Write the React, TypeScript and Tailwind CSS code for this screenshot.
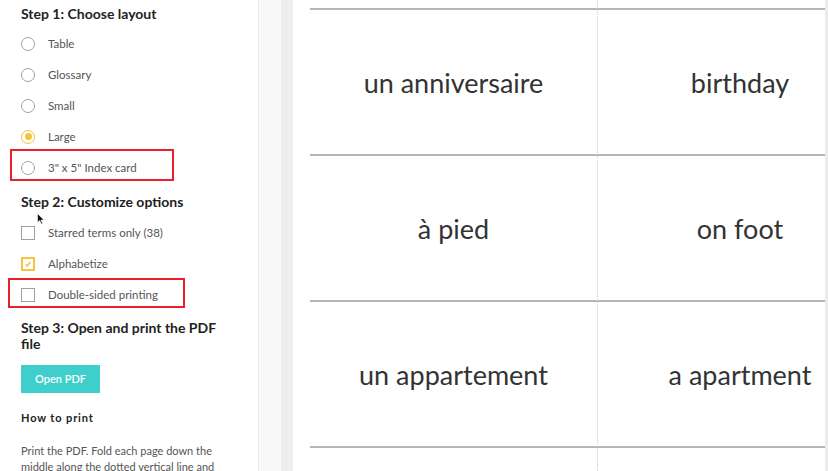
import { ReactNode } from 'react';

const font = { fontFamily: 'Lato, "Open Sans", sans-serif' };

const Radio = ({ checked = false }: { checked?: boolean }) =>
  checked ? (
    <span className="flex h-[14px] w-[14px] shrink-0 items-center justify-center rounded-full border-[1.5px] border-[#f7c23a] bg-white">
      <span className="h-[7px] w-[7px] rounded-full bg-[#f7c23a]" />
    </span>
  ) : (
    <span className="h-[14px] w-[14px] shrink-0 rounded-full border-[1.5px] border-[#9aa3ab] bg-white" />
  );

const Check = ({ checked = false }: { checked?: boolean }) =>
  checked ? (
    <span className="flex h-[14px] w-[14px] shrink-0 items-center justify-center border-2 border-[#f6c441] bg-white">
      <svg viewBox="0 0 10 10" className="h-[8px] w-[8px]" fill="none" stroke="#f3b82a" strokeWidth={1.6}>
        <path d="M2 5.5l2 2L8 2.5" />
      </svg>
    </span>
  ) : (
    <span className="h-[14px] w-[14px] shrink-0 border-[1.5px] border-[#9aa3ab] bg-white" />
  );

const Option = ({ control, label }: { control: ReactNode; label: string }) => (
  <div className="flex h-[31px] items-center gap-[13px] pl-[21px]">
    {control}
    <span className="text-[11.5px] text-[#555]">{label}</span>
  </div>
);

const Row = ({ term, def }: { term: string; def: string }) => (
  <div className="flex h-[146px] border-b-2 border-[#b5b5b5]">
    <div className="flex w-[287px] shrink-0 items-center justify-center pt-[3px] text-[27px] text-[#333]">{term}</div>
    <div className="flex w-[286px] shrink-0 items-center justify-center pt-[3px] text-[27px] text-[#333]">{def}</div>
  </div>
);

export default function App() {
  return (
    <div className="flex h-[471px] w-[828px] overflow-hidden bg-white" style={font}>
      <aside className="w-[259px] shrink-0 border-r border-[#ececec] bg-white pt-[3px]">
        <h2 className="pl-[21px] text-[14px] font-bold text-[#222]">Step 1: Choose layout</h2>
        <div className="mt-[4px]">
          <Option control={<Radio />} label="Table" />
          <Option control={<Radio />} label="Glossary" />
          <Option control={<Radio />} label="Small" />
          <Option control={<Radio checked />} label="Large" />
          <div className="relative">
            <div className="absolute left-[10px] top-[-3px] h-[32px] w-[164px] border-2 border-[#e8202a]" />
            <Option control={<Radio />} label={'3" x 5" Index card'} />
          </div>
        </div>
        <h2 className="relative mt-[8px] pl-[21px] text-[14px] font-bold text-[#222]">
          Step 2: Customize options
          <svg className="absolute left-[37px] top-[22px] h-[12px] w-[8px]" viewBox="0 0 8 12">
            <path d="M0.5 0.5v9l2.2-2 1.6 3.6 1.3-.6-1.6-3.4h3z" fill="#111" stroke="#fff" strokeWidth={0.6} />
          </svg>
        </h2>
        <div className="mt-[5px]">
          <Option control={<Check />} label="Starred terms only (38)" />
          <Option control={<Check checked />} label="Alphabetize" />
          <div className="relative">
            <div className="absolute left-[8px] top-[-1px] h-[30px] w-[177px] border-2 border-[#e8202a]" />
            <Option control={<Check />} label="Double-sided printing" />
          </div>
        </div>
        <h2 className="mt-[10px] w-[230px] pl-[21px] text-[14px] font-bold leading-[16px] text-[#222]">
          Step 3: Open and print the PDF file
        </h2>
        <button className="ml-[21px] mt-[13px] h-[28px] w-[79px] bg-[#3ecfcc] text-[11px] font-semibold text-white">
          Open PDF
        </button>
        <h3 className="mt-[17px] pl-[21px] text-[11px] font-bold tracking-[0.08em] text-[#222]">How to print</h3>
        <p className="mt-[16px] w-[232px] pl-[21px] text-[11px] leading-[16px] text-[#555]">
          Print the PDF. Fold each page down the middle along the dotted vertical line and cut along the solid lines.
        </p>
      </aside>
      <div className="w-[22px] shrink-0 bg-[#f8f8f8]" />
      <div className="w-[12px] shrink-0 bg-[#eeeeee]" />
      <main className="relative w-[532px] shrink-0 overflow-hidden bg-white pl-[17px]">
        <div className="absolute bottom-0 left-[304px] top-0 border-l border-dotted border-[#cfcfcf]" />
        <div className="mt-[8px] border-t-2 border-[#b5b5b5]">
          <Row term="un anniversaire" def="birthday" />
          <Row term="à pied" def="on foot" />
          <Row term="un appartement" def="a apartment" />
        </div>
      </main>
      <div className="w-[3px] shrink-0 bg-[#ececec]" />
    </div>
  );
}
